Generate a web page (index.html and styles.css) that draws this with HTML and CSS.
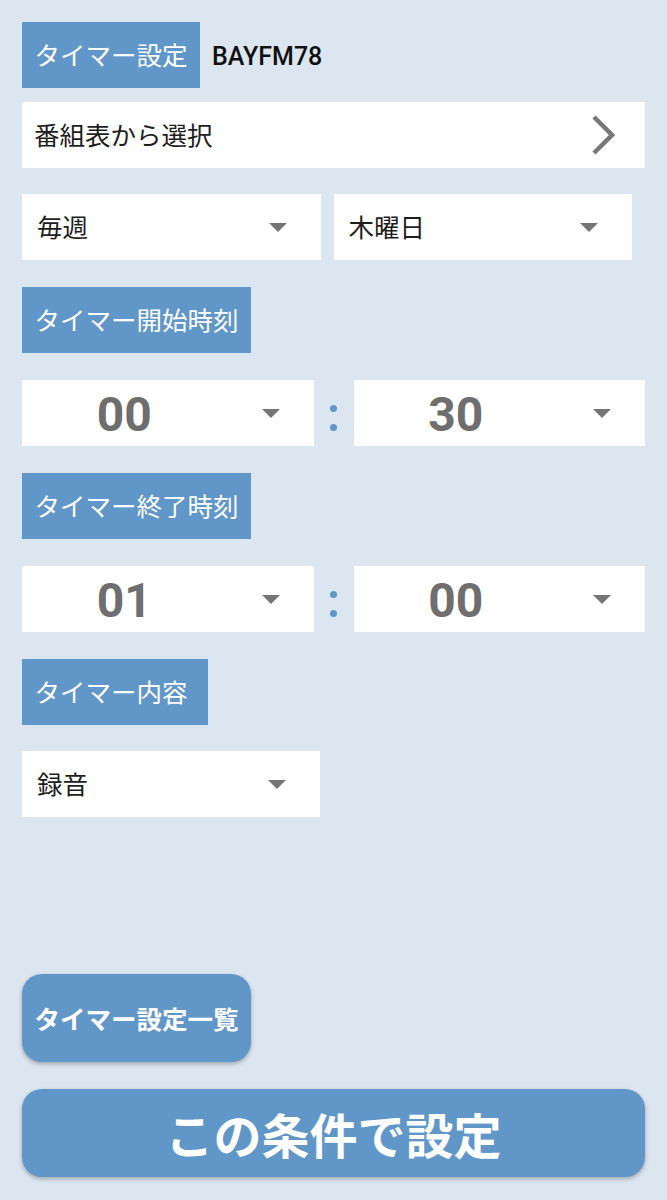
FILE: index.html
```html
<!DOCTYPE html>
<html lang="ja">
<head>
<meta charset="utf-8">
<title>タイマー設定</title>
<link rel="stylesheet" href="styles.css">
</head>
<body>
<main class="page">
  <div class="head">
    <span class="label">タイマー設定</span>
    <span class="station">BAYFM78</span>
  </div>

  <div class="field link">
    <span class="text">番組表から選択</span>
    <svg class="chevron" width="24" height="40" viewBox="0 0 24 40"><polyline points="3,2 21,20 3,38" fill="none" stroke="#777777" stroke-width="4.5"/></svg>
  </div>

  <div class="pair">
    <div class="field select"><span class="text">毎週</span><span class="arrow"></span></div>
    <div class="field select"><span class="text">木曜日</span><span class="arrow"></span></div>
  </div>

  <div class="label block">タイマー開始時刻</div>

  <div class="time">
    <div class="field select num"><span class="digits">00</span><span class="arrow"></span></div>
    <div class="colon"><i></i><i></i></div>
    <div class="field select num"><span class="digits">30</span><span class="arrow"></span></div>
  </div>

  <div class="label block">タイマー終了時刻</div>

  <div class="time">
    <div class="field select num"><span class="digits">01</span><span class="arrow"></span></div>
    <div class="colon"><i></i><i></i></div>
    <div class="field select num"><span class="digits">00</span><span class="arrow"></span></div>
  </div>

  <div class="label block wide">タイマー内容</div>

  <div class="field select single"><span class="text">録音</span><span class="arrow"></span></div>

  <button class="btn list">タイマー設定一覧</button>
  <button class="btn submit">この条件で設定</button>
</main>
</body>
</html>
```

FILE: styles.css
```css
html, body {
  margin: 0;
  padding: 0;
}
body {
  background: #dce6f0;
  font-family: Roboto, "Noto Sans CJK JP", sans-serif;
  color: #1e1e1e;
}
.page {
  box-sizing: border-box;
  min-height: 1200px;
  padding: 22px 22px 23px;
  display: flex;
  flex-direction: column;
}
.head {
  display: flex;
  align-items: center;
  gap: 12px;
  height: 66px;
}
.label {
  display: flex;
  align-items: center;
  box-sizing: border-box;
  height: 66px;
  padding: 4px 12.5px 0;
  background: #6196c8;
  color: #ffffff;
  font-size: 25.5px;
  line-height: 1;
}
.label.block {
  align-self: flex-start;
  margin-top: 27px;
}
.label.wide {
  padding-right: 20px;
}
.station {
  font-size: 25px;
  font-weight: 500;
  color: #111111;
  padding-top: 2px;
}
.field {
  display: flex;
  align-items: center;
  height: 66px;
  background: #ffffff;
  font-size: 25.5px;
  line-height: 1;
  box-sizing: border-box;
}
.field .text {
  padding-top: 4px;
}
.link {
  margin-top: 14px;
  padding: 0 30px 0 12px;
}
.link .chevron {
  margin-left: auto;
}
.pair {
  margin-top: 26px;
  width: 610px;
  display: grid;
  grid-template-columns: 1fr 1fr;
  gap: 13px;
}
.select {
  padding: 0 34px 0 15px;
}
.select .arrow {
  margin-left: auto;
  width: 0;
  height: 0;
  border-left: 9px solid transparent;
  border-right: 9px solid transparent;
  border-top: 9px solid #757575;
}
.single {
  margin-top: 26px;
  width: 298px;
}
.time {
  margin-top: 27px;
  display: grid;
  grid-template-columns: 1fr 40px 1fr;
}
.num {
  padding-left: 0;
}
.num .digits {
  flex: 1;
  margin-right: 35px;
  padding-top: 3px;
  text-align: center;
  font-family: Roboto, sans-serif;
  font-weight: 700;
  font-size: 48px;
  color: #6e6e6e;
}
.num .arrow {
  margin-left: 0;
}
.colon {
  display: flex;
  flex-direction: column;
  align-items: center;
  justify-content: center;
  gap: 12px;
  padding-top: 9px;
}
.colon i {
  display: block;
  width: 7px;
  height: 7px;
  border-radius: 50%;
  background: #6196c8;
}
.btn {
  border: none;
  margin: 0;
  background: #6196c8;
  color: #ffffff;
  font-family: "Noto Sans CJK JP", sans-serif;
  font-weight: 700;
  border-radius: 20px;
  box-shadow: 0 2px 4px rgba(0, 0, 0, 0.28);
  height: 88px;
  line-height: 1;
  cursor: pointer;
}
.list {
  margin-top: auto;
  align-self: flex-start;
  padding: 0 12.5px;
  font-size: 25.5px;
}
.submit {
  margin-top: 27px;
  font-size: 48px;
}
```
